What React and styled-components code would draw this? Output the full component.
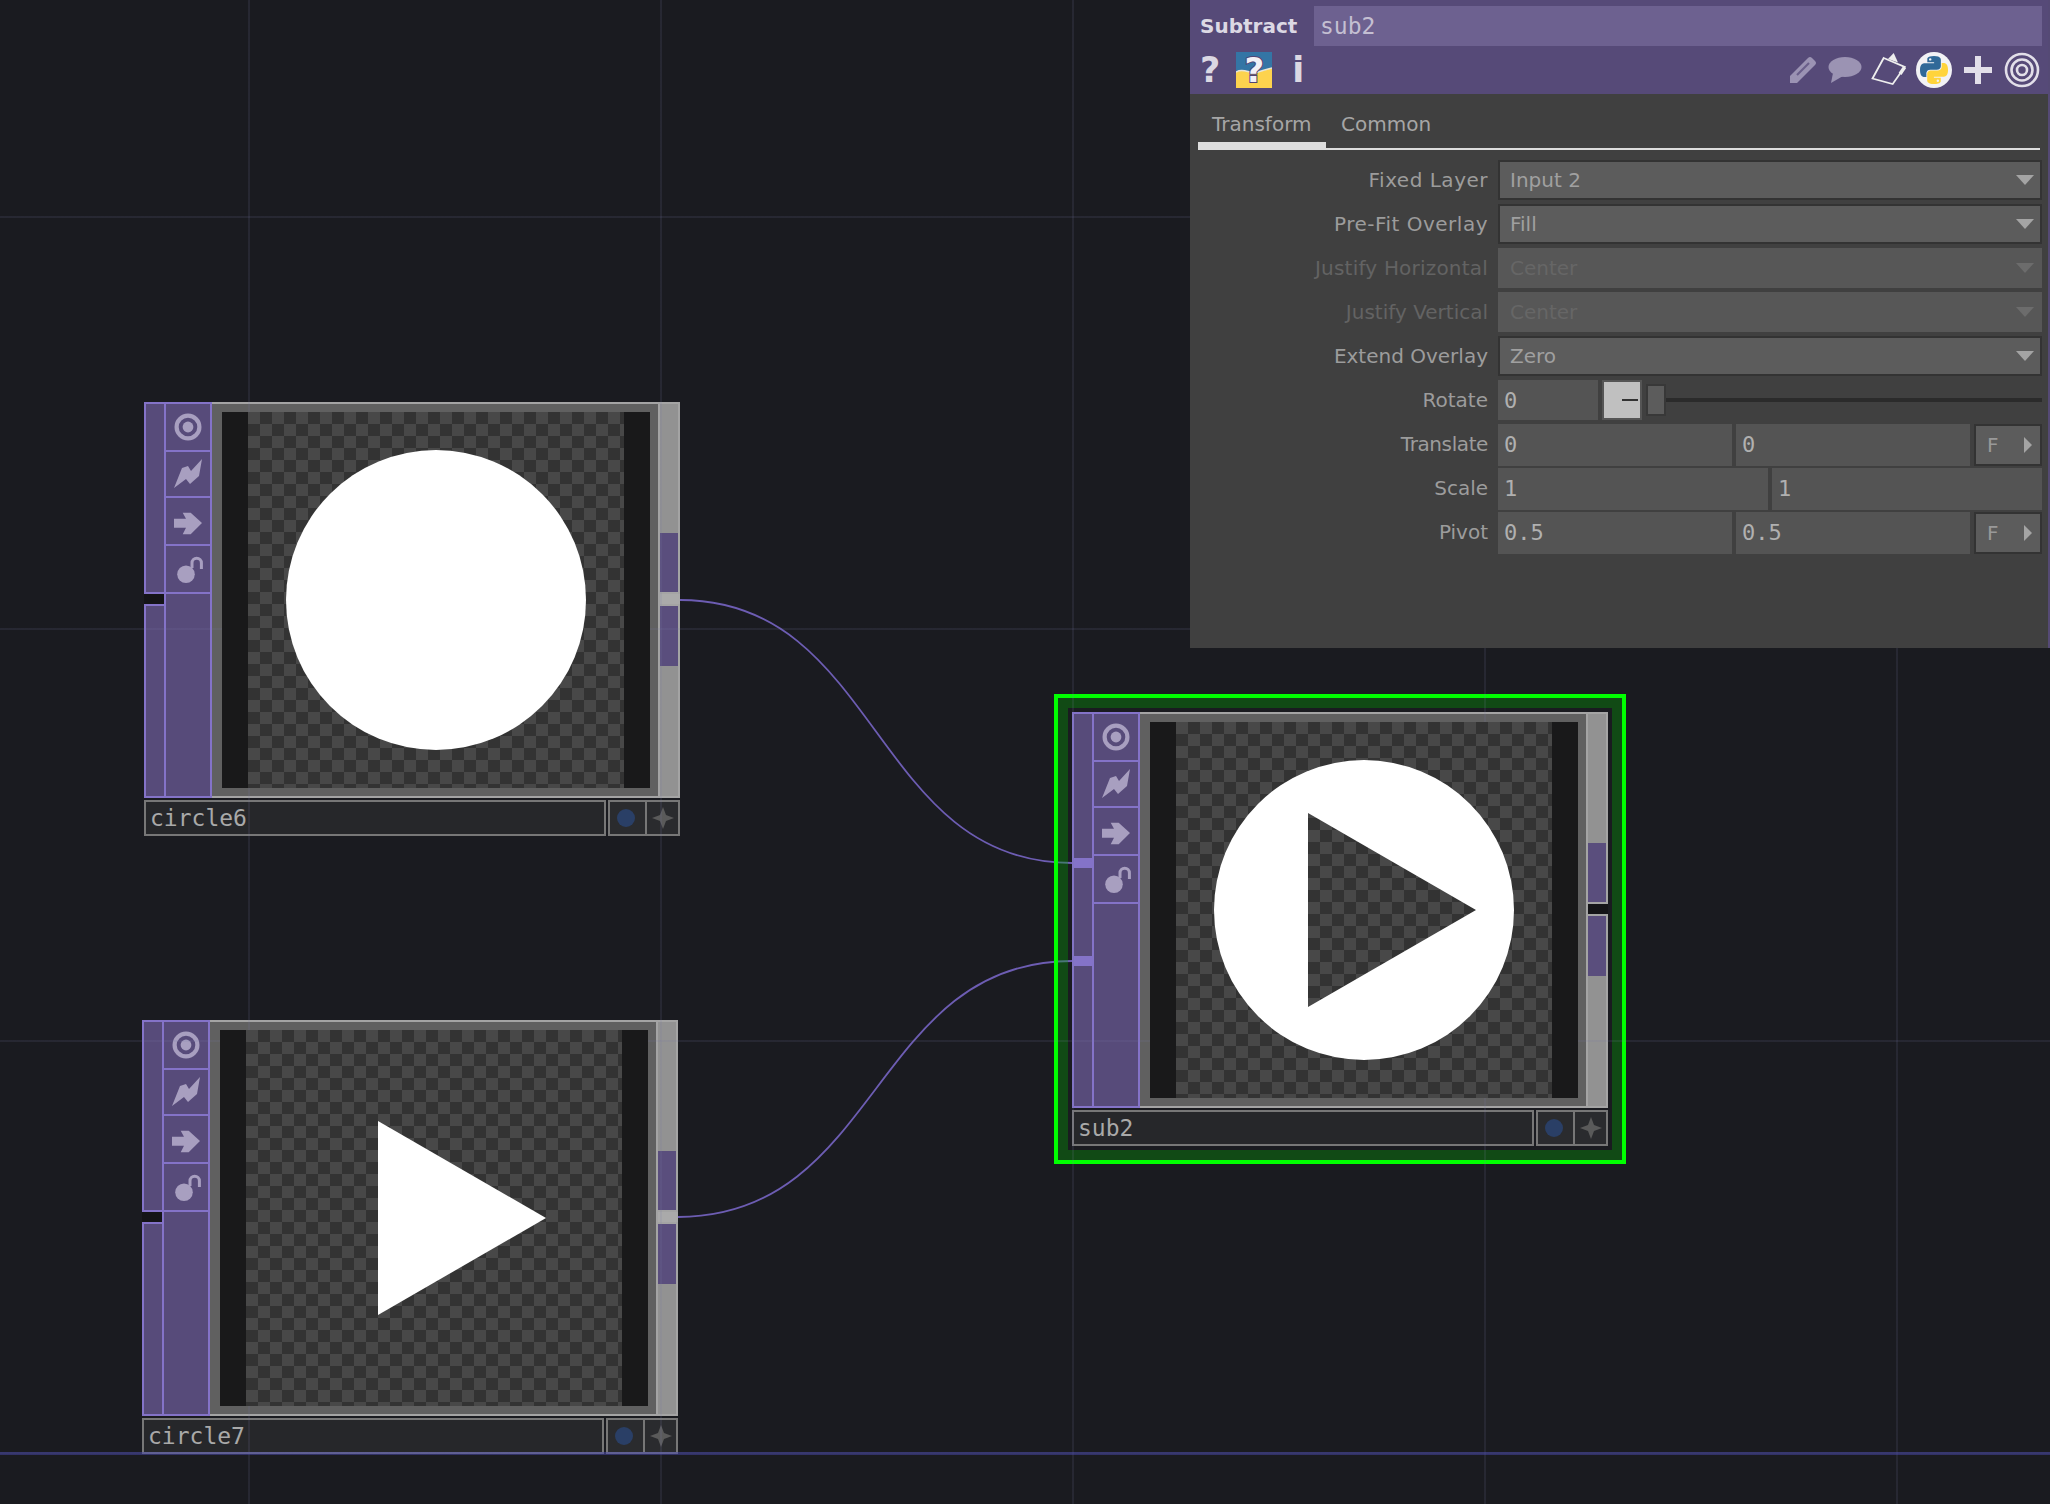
import React from 'react';
import styled, { createGlobalStyle } from 'styled-components';

const GlobalStyle = createGlobalStyle`
  html, body {
    margin: 0;
    padding: 0;
    background: #1a1b20;
    overflow: hidden;
  }
  * {
    box-sizing: border-box;
  }
`;

const SANS = `"DejaVu Sans", "Liberation Sans", sans-serif`;
const MONO = `"DejaVu Sans Mono", "Liberation Mono", monospace`;

const Canvas = styled.div`
  position: relative;
  width: 2050px;
  height: 1504px;
  overflow: hidden;
  background: #1a1b20;
`;

const Grid = styled.div`
  position: absolute;
  inset: 0;
  z-index: 5;
  pointer-events: none;
  background-image:
    linear-gradient(rgba(72, 72, 170, 0.5), rgba(72, 72, 170, 0.5)),
    linear-gradient(to right, rgba(120, 120, 165, 0.14) 2px, transparent 2px),
    linear-gradient(to bottom, rgba(120, 120, 165, 0.14) 2px, transparent 2px);
  background-size: 100% 3px, 412px 412px, 412px 412px;
  background-position: 0 1452px, 248px 0, 0 216px;
  background-repeat: no-repeat, repeat, repeat;
`;

const Wires = styled.svg`
  position: absolute;
  left: 0;
  top: 0;
`;

const Placed = styled.div`
  position: absolute;
  left: ${(p) => p.$x}px;
  top: ${(p) => p.$y}px;
`;

const Selection = styled.div`
  width: 572px;
  height: 470px;
  border: 4px solid #00ff00;
  box-shadow: inset 0 0 0 10px rgba(0, 170, 0, 0.33);
  padding: 14px;
`;

/* node */
const NodeWrap = styled.div`
  display: flex;
  flex-direction: column;
  gap: 2px;
  width: 536px;
`;

const NodeBody = styled.div`
  display: flex;
  height: 396px;
`;

const InputStrip = styled.div`
  position: relative;
  display: flex;
  flex-direction: column;
  width: 20px;
  gap: 10px;
  background: #141417;
`;

const InputPort = styled.div`
  flex: ${(p) => p.$grow};
  background: #574b7a;
  border: 2px solid #8473c8;
  border-right: none;
`;

const PortMark = styled.div`
  position: absolute;
  left: 2px;
  right: 0;
  top: ${(p) => p.$top}px;
  height: 10px;
  background: #8473c8;
`;

const ButtonColumn = styled.div`
  display: flex;
  flex-direction: column;
  width: 48px;
  background: #574b7a;
  border: 2px solid #8473c8;
`;

const SideButton = styled.div`
  display: flex;
  align-items: center;
  justify-content: center;
  height: ${(p) => p.$h}px;
  padding-top: ${(p) => p.$pt || 0}px;
  border-bottom: 2px solid #8473c8;
`;

const Viewer = styled.div`
  display: flex;
  width: 446px;
  background: #606060;
  border-top: 2px solid #a4a4a4;
  border-bottom: 2px solid #a4a4a4;
  padding: 8px 8px 8px 10px;
`;

const Preview = styled.div`
  position: relative;
  z-index: 6;
  display: flex;
  justify-content: center;
  width: 428px;
  height: 376px;
  background: #19191a;
`;

const Checker = styled.div`
  width: 376px;
  height: 376px;
  background-image: conic-gradient(#333333 0 25%, #484848 0 50%, #333333 0 75%, #484848 0);
  background-size: 24px 24px;

  svg {
    display: block;
  }
`;

const OutputStrip = styled.div`
  display: flex;
  flex-direction: column;
  width: 22px;
  background: ${(p) => (p.$linked ? '#aaaaaa' : '#141417')};
  border-left: 2px solid #a4a4a4;
`;

const OutputPort = styled.div`
  display: flex;
  flex-direction: column;
  justify-content: ${(p) => (p.$upper ? 'flex-end' : 'flex-start')};
  height: ${(p) => (p.$upper ? 192 : 194)}px;
  margin-bottom: ${(p) => (p.$upper ? 10 : 0)}px;
  background: #929292;
  border: 2px solid #a4a4a4;
  border-left: none;
`;

const OutputFill = styled.div`
  height: ${(p) => p.$h}px;
  background: #5a4e7d;
`;

const NameRow = styled.div`
  display: flex;
  gap: 2px;
  height: 36px;
`;

const NameField = styled.div`
  flex: 1;
  padding-left: 4px;
  background: #26272a;
  border: 2px solid #777777;
  color: #a9a9a9;
  font-family: ${MONO};
  font-size: 23px;
  line-height: 33px;
`;

const FlagGroup = styled.div`
  display: flex;
  width: 72px;
  border: 2px solid #777777;
  background: #2a2b2e;
`;

const Flag = styled.div`
  display: flex;
  flex: ${(p) => p.$w}px 0 0;
  align-items: center;
  justify-content: center;
  border-left: ${(p) => (p.$divided ? '2px solid #777777' : 'none')};
`;

const BlueDot = styled.div`
  width: 18px;
  height: 18px;
  margin-right: 3px;
  border-radius: 50%;
  background: #2a3f66;
`;

/* parameter panel */
const Panel = styled.div`
  position: absolute;
  right: 0;
  top: 0;
  z-index: 7;
  display: flex;
  flex-direction: column;
  width: 860px;
  height: 648px;
  background: #404040;
  border-right: 2px solid #554a75;
  font-family: ${SANS};
`;

const Header = styled.div`
  display: flex;
  flex-direction: column;
  height: 94px;
  padding: 6px 6px 0 0;
  background: #564a78;
`;

const TitleRow = styled.div`
  display: flex;
  height: 40px;
`;

const OpType = styled.div`
  width: 124px;
  padding-left: 10px;
  color: #dcd9e4;
  font-size: 20px;
  font-weight: 700;
  line-height: 41px;
`;

const OpName = styled.div`
  flex: 1;
  padding-left: 6px;
  background: #6d6190;
  color: #c4bfd2;
  font-family: ${MONO};
  font-size: 23px;
  line-height: 41px;
`;

const ToolRow = styled.div`
  display: flex;
  align-items: center;
  height: 36px;
  margin-top: 6px;
  padding: 0 2px 0 10px;
`;

const Glyph = styled.span`
  color: #dbd8e3;
  font-size: 35px;
  font-weight: 700;
  line-height: 38px;
  margin: 0 ${(p) => p.$mr || 0}px 0 ${(p) => p.$ml || 0}px;
`;

const ToolIcon = styled.svg`
  flex: none;
  display: block;
  margin-left: ${(p) => p.$ml || 0}px;
`;

const BadgeBox = styled.div`
  position: relative;
  display: flex;
  flex: none;
  align-items: center;
  justify-content: center;
  width: 36px;
  height: 36px;

  svg {
    position: absolute;
    inset: 0;
  }
`;

const BadgeMark = styled.span`
  position: relative;
  color: #f2f0f5;
  font-size: 34px;
  font-weight: 700;
  line-height: 36px;
  -webkit-text-stroke: 2px #504575;
  paint-order: stroke fill;
`;

const Spacer = styled.div`
  flex: 1;
`;

const Tabs = styled.div`
  display: flex;
  height: 56px;
  margin: 0 8px;
  border-bottom: 2px solid #dddddd;
`;

const Tab = styled.div`
  height: ${(p) => (p.$active ? 56 : 54)}px;
  width: ${(p) => (p.$active ? '128px' : 'auto')};
  padding-left: ${(p) => (p.$active ? 14 : 15)}px;
  color: #a6a6a6;
  font-size: 20px;
  line-height: 60px;
  white-space: nowrap;
  border-bottom: ${(p) => (p.$active ? '8px solid #dddddd' : 'none')};
`;

const Rows = styled.div`
  display: flex;
  flex-direction: column;
  gap: 4px;
  margin-top: 10px;
  padding-right: 6px;
`;

const Row = styled.div`
  display: grid;
  grid-template-columns: 308px 1fr;
  height: 40px;
`;

const Label = styled.div`
  padding-right: 10px;
  text-align: right;
  color: ${(p) => (p.$off ? '#636363' : '#9c9c9c')};
  font-size: 20px;
  letter-spacing: ${(p) => p.$track || 0}px;
  line-height: 40px;
  white-space: nowrap;
`;

const Dropdown = styled.div`
  display: flex;
  align-items: center;
  justify-content: space-between;
  padding: 0 ${(p) => (p.$off ? 8 : 6)}px 0 ${(p) => (p.$off ? 12 : 10)}px;
  background: ${(p) => (p.$off ? '#575757' : '#5c5c5c')};
  border: ${(p) => (p.$off ? 'none' : '2px solid #333333')};
  color: ${(p) => (p.$off ? '#666666' : '#a0a0a0')};
  font-size: 20px;

  &::after {
    content: '';
    border-left: 9px solid transparent;
    border-right: 9px solid transparent;
    border-top: 10px solid ${(p) => (p.$off ? '#6c6c6c' : '#a4a4a4')};
  }
`;

const Fields = styled.div`
  display: grid;
  grid-template-columns: ${(p) => (p.$withMode ? '1fr 1fr 68px' : '1fr 1fr')};
  gap: 4px;
`;

const NumField = styled.div`
  padding-left: 6px;
  background: #545454;
  color: #b0b0b0;
  font-family: ${MONO};
  font-size: 22px;
  line-height: 42px;
`;

const ModeButton = styled.div`
  display: flex;
  align-items: center;
  justify-content: space-between;
  padding: 0 8px 0 11px;
  background: #5c5c5c;
  border: 2px solid #333333;
  color: #999999;
  font-size: 20px;

  &::after {
    content: '';
    border-top: 8px solid transparent;
    border-bottom: 8px solid transparent;
    border-left: 8px solid #a4a4a4;
  }
`;

const SliderRow = styled.div`
  display: flex;
  align-items: center;
  gap: 4px;
`;

const RotateField = styled(NumField)`
  width: 100px;
  height: 40px;
`;

const ResetButton = styled.div`
  display: flex;
  align-items: center;
  justify-content: flex-end;
  width: 40px;
  height: 40px;
  padding-right: 2px;
  background: #c0c0c0;
  border: 2px solid #555555;

  &::after {
    content: '';
    width: 16px;
    height: 2px;
    background: #333333;
  }
`;

const SliderTrack = styled.div`
  display: flex;
  flex: 1;
  align-items: center;

  &::after {
    content: '';
    flex: 1;
    height: 4px;
    background: #2b2b2b;
  }
`;

const Knob = styled.div`
  width: 20px;
  height: 32px;
  background: #5c5c5c;
  border: 2px solid #383838;
`;

const TargetIcon = () => (
  <svg width="30" height="30" viewBox="0 0 30 30">
    <circle cx="15" cy="15" r="11.4" fill="none" stroke="#a89fc0" strokeWidth="4.2" />
    <circle cx="15" cy="15" r="5.4" fill="#a89fc0" />
  </svg>
);

const BoltIcon = () => (
  <svg width="30" height="30" viewBox="0 0 30 30">
    <polygon points="29,0 18,12 15,7 9,9 1,29 13,20 17,25 26,17" fill="#a89fc0" />
  </svg>
);

const ArrowIcon = () => (
  <svg width="30" height="30" viewBox="0 0 30 30">
    <polygon points="1,10.7 13,10.7 9.7,4.7 17.7,4.7 29,15 17.7,26.3 9.7,26.3 13,19.7 1,19.7" fill="#a89fc0" />
  </svg>
);

const LockIcon = () => (
  <svg width="30" height="34" viewBox="0 0 30 34">
    <circle cx="13" cy="22.3" r="8.8" fill="#a89fc0" />
    <path d="M19 16 V11 A4.7 4.7 0 0 1 28.4 11 V17" fill="none" stroke="#a89fc0" strokeWidth="3" />
  </svg>
);

const StarIcon = () => (
  <svg width="24" height="24" viewBox="0 0 24 24">
    <path d="M12 1 L15 9 L23 12 L15 15 L12 23 L9 15 L1 12 L9 9 Z" fill="#5a5a5a" />
  </svg>
);

const HelpBadge = () => (
  <BadgeBox>
    <svg width="36" height="36" viewBox="0 0 36 36">
      <rect width="36" height="36" fill="#3475a5" />
      <path d="M0 20 C8 15 14 23 22 20 C28 18 32 17 36 16 V36 H0 Z" fill="#fdd34e" />
      <path d="M0 20 C8 15 14 23 22 20 C28 18 32 17 36 16" fill="none" stroke="#e8e4d8" strokeWidth="1.5" />
    </svg>
    <BadgeMark>?</BadgeMark>
  </BadgeBox>
);

const PencilIcon = () => (
  <ToolIcon width="28" height="28" viewBox="0 0 28 28">
    <path d="M1 27 V20 L19 2 Q21 0 23 2 L26 5 Q28 7 26 9 L8 27 Z" fill="#9b93b3" />
    <path d="M8 19 L20 7" stroke="#6a5f8a" strokeWidth="2.2" />
  </ToolIcon>
);

const BubbleIcon = () => (
  <ToolIcon width="34" height="28" viewBox="0 0 34 28" $ml={11}>
    <ellipse cx="17" cy="11" rx="16.5" ry="10" fill="#9b93b3" />
    <path d="M5 17 L3 27 L15 20 Z" fill="#9b93b3" />
  </ToolIcon>
);

const NoteIcon = () => (
  <ToolIcon width="36" height="36" viewBox="0 0 36 36" $ml={9}>
    <path d="M12.7 6 L33.7 15 L21.7 32 L1.5 26.5 Z" fill="none" stroke="#eeeeee" strokeWidth="1.8" />
    <path d="M17 7 L22.7 1 L27 10.5 Z" fill="#eeeeee" />
    <path d="M33.7 15 L29 22" stroke="#eeeeee" strokeWidth="3.5" />
  </ToolIcon>
);

const PYTHON_SNAKE =
  'M54.9 0C26.8 0 28.6 12.2 28.6 12.2l0 12.6h26.8v3.8H17.9S0 26.6 0 54.9c0 28.3 15.6 27.3 15.6 27.3h9.3V69.1s-.5-15.6 15.4-15.6h26.6s14.9.2 14.9-14.4V14.9S84 0 54.9 0zM40.1 8.5a4.8 4.8 0 1 1 0 9.6 4.8 4.8 0 0 1 0-9.6z';

const PythonIcon = () => (
  <ToolIcon width="36" height="36" viewBox="0 0 36 36" $ml={9}>
    <circle cx="18" cy="18" r="18" fill="#f2f2f5" />
    <g transform="translate(4 4) scale(0.255)">
      <path d={PYTHON_SNAKE} fill="#306998" />
      <path d={PYTHON_SNAKE} fill="#ffd43b" transform="rotate(180 55 55)" />
    </g>
  </ToolIcon>
);

const PlusIcon = () => (
  <ToolIcon width="28" height="28" viewBox="0 0 28 28" $ml={12}>
    <path d="M14 0 V28 M0 14 H28" stroke="#e2dfe9" strokeWidth="6" />
  </ToolIcon>
);

const RingsIcon = () => (
  <ToolIcon width="36" height="36" viewBox="0 0 36 36" $ml={12}>
    <circle cx="18" cy="18" r="16" fill="none" stroke="#e2dfe9" strokeWidth="2.6" />
    <circle cx="18" cy="18" r="10.5" fill="none" stroke="#e2dfe9" strokeWidth="2.6" />
    <circle cx="18" cy="18" r="5" fill="none" stroke="#e2dfe9" strokeWidth="2.6" />
  </ToolIcon>
);

const Picture = ({ circle, triangle }) => {
  const disc = 'M38 188 a150 150 0 1 0 300 0 a150 150 0 1 0 -300 0 Z';
  const tri = 'M132 91 L132 285 L300 188 Z';
  return (
    <svg width="376" height="376" viewBox="0 0 376 376">
      <path d={`${circle ? disc : ''} ${triangle ? tri : ''}`} fill="#ffffff" fillRule="evenodd" />
    </svg>
  );
};

const Node = ({ name, split, marks = [], linked, circle, triangle }) => (
  <NodeWrap>
    <NodeBody>
      <InputStrip>
        {split ? (
          <>
            <InputPort $grow="192 0 0" />
            <InputPort $grow="194 0 0" />
          </>
        ) : (
          <InputPort $grow="1" />
        )}
        {marks.map((top) => (
          <PortMark key={top} $top={top} />
        ))}
      </InputStrip>
      <ButtonColumn>
        <SideButton $h={48}><TargetIcon /></SideButton>
        <SideButton $h={46}><BoltIcon /></SideButton>
        <SideButton $h={48} $pt={4}><ArrowIcon /></SideButton>
        <SideButton $h={48}><LockIcon /></SideButton>
      </ButtonColumn>
      <Viewer>
        <Preview>
          <Checker>
            <Picture circle={circle} triangle={triangle} />
          </Checker>
        </Preview>
      </Viewer>
      <OutputStrip $linked={linked}>
        <OutputPort $upper>
          <OutputFill $h={59} />
        </OutputPort>
        <OutputPort>
          <OutputFill $h={60} />
        </OutputPort>
      </OutputStrip>
    </NodeBody>
    <NameRow>
      <NameField>{name}</NameField>
      <FlagGroup>
        <Flag $w={35}><BlueDot /></Flag>
        <Flag $w={33} $divided><StarIcon /></Flag>
      </FlagGroup>
    </NameRow>
  </NodeWrap>
);

const DROPDOWNS_TOP = [
  { label: 'Fixed Layer', value: 'Input 2', track: 0.5 },
  { label: 'Pre-Fit Overlay', value: 'Fill', track: 0.5 },
  { label: 'Justify Horizontal', value: 'Center', off: true, track: 0.2 },
  { label: 'Justify Vertical', value: 'Center', off: true },
  { label: 'Extend Overlay', value: 'Zero' },
];

const App = () => (
  <Canvas>
    <GlobalStyle />

    <Wires width="2050" height="1504" viewBox="0 0 2050 1504">
      <path d="M680 600 C880 600 872 863 1072 863" fill="none" stroke="#6d5db3" strokeWidth="1.8" />
      <path d="M678 1217 C880 1217 872 961 1072 961" fill="none" stroke="#6d5db3" strokeWidth="1.8" />
    </Wires>

    <Placed $x={144} $y={402}>
      <Node name="circle6" split linked circle />
    </Placed>

    <Placed $x={142} $y={1020}>
      <Node name="circle7" split linked triangle />
    </Placed>

    <Placed $x={1054} $y={694}>
      <Selection>
        <Node name="sub2" marks={[146, 244]} circle triangle />
      </Selection>
    </Placed>

    <Grid />

    <Panel>
      <Header>
        <TitleRow>
          <OpType>Subtract</OpType>
          <OpName>sub2</OpName>
        </TitleRow>
        <ToolRow>
          <Glyph $mr={16}>?</Glyph>
          <HelpBadge />
          <Glyph $ml={20}>i</Glyph>
          <Spacer />
          <PencilIcon />
          <BubbleIcon />
          <NoteIcon />
          <PythonIcon />
          <PlusIcon />
          <RingsIcon />
        </ToolRow>
      </Header>

      <Tabs>
        <Tab $active>Transform</Tab>
        <Tab>Common</Tab>
      </Tabs>

      <Rows>
        {DROPDOWNS_TOP.map((row) => (
          <Row key={row.label}>
            <Label $off={row.off} $track={row.track}>{row.label}</Label>
            <Dropdown $off={row.off}>{row.value}</Dropdown>
          </Row>
        ))}

        <Row>
          <Label>Rotate</Label>
          <SliderRow>
            <RotateField>0</RotateField>
            <ResetButton />
            <SliderTrack>
              <Knob />
            </SliderTrack>
          </SliderRow>
        </Row>

        <Row>
          <Label $track={-0.4}>Translate</Label>
          <Fields $withMode>
            <NumField>0</NumField>
            <NumField>0</NumField>
            <ModeButton>F</ModeButton>
          </Fields>
        </Row>

        <Row>
          <Label>Scale</Label>
          <Fields>
            <NumField>1</NumField>
            <NumField>1</NumField>
          </Fields>
        </Row>

        <Row>
          <Label>Pivot</Label>
          <Fields $withMode>
            <NumField>0.5</NumField>
            <NumField>0.5</NumField>
            <ModeButton>F</ModeButton>
          </Fields>
        </Row>
      </Rows>
    </Panel>
  </Canvas>
);

export default App;
